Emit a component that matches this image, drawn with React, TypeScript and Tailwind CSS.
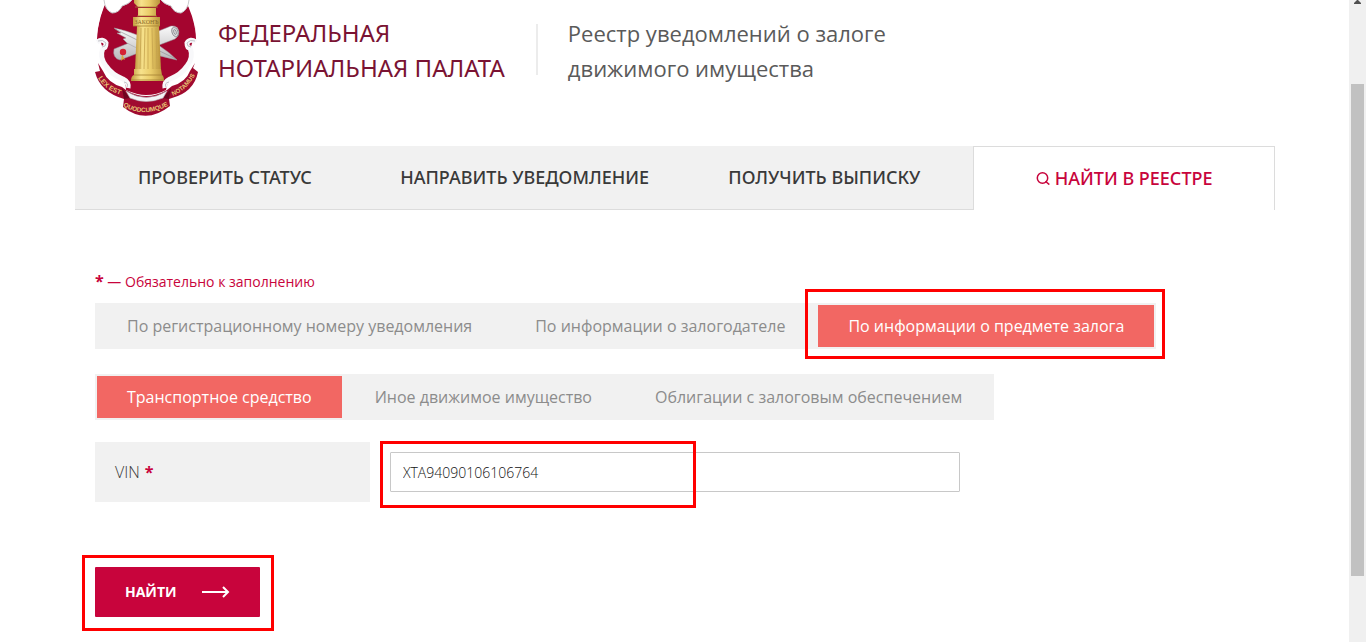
import { useState } from "react";

const mainTabs = ["Проверить статус", "Направить уведомление", "Получить выписку"];

function Emblem() {
  return (
    <svg viewBox="0 0 103 116" className="h-[116px] w-[103px] shrink-0" role="img" aria-label="Lex est quodcumque notamus">
      <defs>
        <linearGradient id="gold" x1="0" x2="1" y1="0" y2="0">
          <stop offset="0" stopColor="#c29b40" />
          <stop offset="0.3" stopColor="#f7e28c" />
          <stop offset="0.6" stopColor="#ebcd6a" />
          <stop offset="1" stopColor="#b8933c" />
        </linearGradient>
        <linearGradient id="paper" x1="0" x2="0" y1="0" y2="1">
          <stop offset="0" stopColor="#fafafa" />
          <stop offset="1" stopColor="#b9b9bb" />
        </linearGradient>
        <path id="mottoLeft" d="M3 78 Q10 91 32 97" />
        <path id="mottoMid" d="M28 106 Q51 120 80 102" />
        <path id="mottoRight" d="M78 96 Q94 89 102 71" />
      </defs>
      <path d="M5 0 H99 Q101 10 102 33 C103 45 96 46 97 57 C96 78 80 84 74 94 Q51 107 30 94 C24 84 8 78 7 57 C7 46 0 45 2 33 Q3 10 5 0Z" fill="#fff" />
      <path d="M12 0 Q3 15 2 39 Q8 42 7 50 C7 67 15 75 27 79 Q31 83 31 90 Q42 95 51 95 Q62 95 71 90 Q72 82 77 79 C89 74 96 64 97 51 Q95 42 101 39 Q101 15 90 0 L87 8 Q83 14 77 8 L72 0 H32 L25 9 Q20 14 16 8Z" fill="#a4052f" />
      <path d="M3 0 H12 Q5 14 2 34Z M100 0 H90 Q98 14 101 34Z" fill="#fff" />
      <path d="M9 0 Q10 10 17 13 Q24 13 27 6 Q34 4 37 0 M94 0 Q93 10 86 13 Q79 13 76 6 Q69 4 66 0" fill="#fff" stroke="#c9c9cc" strokeWidth="1" />
      <path d="M2 42 Q8 38 11 43 Q11 48 8 48 Q4 57 11 66 Q17 75 28 79 Q34 82 33 88 M101 42 Q95 38 92 43 Q92 48 95 48 Q99 57 92 66 Q86 75 75 79 Q69 82 70 88" fill="none" stroke="#f8f8fa" strokeWidth="5" />
      <path d="M3 41 Q8 39 11 43 Q11 47 7 47 M29 82 Q34 83 32 87 M100 41 Q95 39 92 43 Q92 47 96 47 M74 82 Q69 83 71 87" fill="none" stroke="#b4b4ba" strokeWidth="0.8" />
      <path d="M19 49 L76 26 Q83 25 84 32 Q84 36 80 39 L25 60 Q17 58 19 49Z" fill="url(#paper)" stroke="#8d8d92" strokeWidth="0.5" />
      <ellipse cx="80" cy="32" rx="3" ry="5" transform="rotate(-20 80 32)" fill="#d9d9db" stroke="#77777c" strokeWidth="0.7" />
      <ellipse cx="80" cy="32" rx="1.2" ry="2.5" transform="rotate(-20 80 32)" fill="none" stroke="#77777c" strokeWidth="0.6" />
      <path d="M19 28 Q30 30 45 36 Q66 44 82 60 Q62 56 47 50 Q39 47 32 43 L28 39 L31 38 L22 33 L26 33Z" fill="url(#paper)" stroke="#98989c" strokeWidth="0.5" />
      <path d="M20 29 Q48 43 81 59" fill="none" stroke="#8b8b90" strokeWidth="0.6" />
      <path d="M27 54 L30 60 L28 59 L26 61Z" fill="#d9a93d" />
      <circle cx="28" cy="52" r="3.2" fill="#d42334" />
      <path d="M42 26 H64 L66 70 H40Z" fill="url(#gold)" />
      <path d="M46 28 L45 69 M50 28 L49 69 M53 28 V69 M57 28 L58 69 M61 28 L62 69" stroke="#c4a24c" strokeWidth="0.8" />
      <path d="M39 0 H65 V3 L61 7 H43 L39 3Z M43 8 H61 V16 H43Z M38 17 H65 V26 H38Z" fill="url(#gold)" />
      <path d="M40 7 H63 M42 16 H62 M38 26 H65" stroke="#a58033" strokeWidth="0.8" />
      <text x="51.5" y="24" textAnchor="middle" fontSize="6" fill="#8a6b2a" className="font-['Liberation_Serif',serif]">ЗАКОНЪ</text>
      <path d="M39 69 H66 L67 75 Q69 76 69 81 H36 Q36 76 39 75Z" fill="url(#gold)" />
      <path d="M39 75 H67 M36 80 H69" stroke="#a58033" strokeWidth="0.8" />
      <path d="M3 63 L8 71 Q13 83 27 87 L31 90 Q51 102 72 90 L77 86 Q91 82 95 71 L100 63 L98 68 L103 72 Q99 92 77 98 L74 99 L75 106 Q51 125 28 107 L29 99 Q5 92 0 72 L5 71Z" fill="#a00b30" />
      <path d="M27 88 L35 98 L29 99 M76 88 L68 98 L74 99" fill="#6f0420" />
      <path d="M31 91 Q51 104 72 91 L68 98 Q51 105 35 98Z" fill="#f4f4f6" stroke="#b5b5ba" strokeWidth="0.6" />
      <g fontWeight="700" fill="#e8c675" className="font-['Liberation_Sans',sans-serif]">
        <text fontSize="6.8"><textPath href="#mottoLeft">LEX EST</textPath></text>
        <text fontSize="6.4"><textPath href="#mottoMid">QUODCUMQUE</textPath></text>
        <text fontSize="6.2"><textPath href="#mottoRight">NOTAMUS</textPath></text>
      </g>
    </svg>
  );
}

function Segments({ items, active, children }: { items: string[]; active: number; children?: React.ReactNode }) {
  return (
    <div className="flex w-fit gap-[3px] bg-[#f1f1f1] p-[2px]">
      {items.map((item, i) => (
        <div key={item} className="relative">
          <button
            type="button"
            aria-pressed={i === active}
            className={
              i === active
                ? "h-[42px] bg-[#f26763] px-[30px] text-base whitespace-nowrap text-white"
                : "h-[42px] px-[30px] text-base whitespace-nowrap text-[#8c8c8c]"
            }
          >
            {item}
          </button>
          {i === active && children}
        </div>
      ))}
    </div>
  );
}

export default function App() {
  const [vin, setVin] = useState("XTA94090106106764");

  return (
    <div className="flex min-h-screen bg-white font-['Noto_Sans','Open_Sans',sans-serif] text-[#393939]">
      <main className="min-w-0 flex-1 pr-[74px] pl-[75px]">
        <header className="flex h-[146px] items-start pl-5">
          <Emblem />
          <a href="#" className="mt-[15px] ml-5 text-2xl leading-[35px] whitespace-nowrap text-[#7a1333] uppercase">
            Федеральная
            <br />
            нотариальная палата
          </a>
          <div className="mt-6 ml-[31px] h-[51px] w-[2px] bg-[#ececec]" />
          <h1 className="mt-4 ml-[30px] font-['Open_Sans','Noto_Sans',sans-serif] text-[22px] leading-[35px] whitespace-nowrap text-[#5a5a5a]">
            Реестр уведомлений о залоге
            <br />
            движимого имущества
          </h1>
        </header>

        <nav className="flex h-16">
          {mainTabs.map((tab) => (
            <a
              key={tab}
              href="#"
              className="flex flex-1 items-center justify-center border-b border-[#dcdcdc] bg-[#f1f1f1] pb-[2px] text-lg font-medium whitespace-nowrap uppercase"
            >
              {tab}
            </a>
          ))}
          <a
            href="#"
            aria-current="page"
            className="-ml-px flex flex-1 items-center justify-center gap-[5px] border border-b-0 border-[#dcdcdc] bg-white pb-[2px] text-lg font-medium whitespace-nowrap text-[#c8043c] uppercase"
          >
            <svg viewBox="0 0 14 14" className="h-[14px] w-[14px]" fill="none" stroke="currentColor" strokeWidth="1.5" aria-hidden="true">
              <circle cx="6.5" cy="7" r="5.2" />
              <path d="M9.5 10.3 L13.3 13.6" />
            </svg>
            Найти в реестре
          </a>
        </nav>

        <form className="px-5 pt-[59px] font-['Open_Sans','Noto_Sans',sans-serif]" onSubmit={(e) => e.preventDefault()}>
          <p className="mb-[9px] text-sm leading-6 text-[#c8043c]">
            <span className="text-base leading-6 font-bold">*</span> — Обязательно к заполнению
          </p>

          <Segments
            items={["По регистрационному номеру уведомления", "По информации о залогодателе", "По информации о предмете залога"]}
            active={2}
          >
            <span className="pointer-events-none absolute -top-4 -right-[11px] -bottom-3 -left-[13px] border-3 border-[#ff0000]" />
          </Segments>

          <div className="mt-[25px]">
            <Segments items={["Транспортное средство", "Иное движимое имущество", "Облигации с залоговым обеспечением"]} active={0} />
          </div>

          <div className="mt-[22px] flex items-center gap-5">
            <label htmlFor="vin" className="flex h-[60px] w-[275px] items-center gap-[5px] bg-[#f1f1f1] px-5 text-base font-light">
              VIN <span className="font-bold text-[#c8043c]">*</span>
            </label>
            <div className="relative w-full max-w-[570px]">
              <input
                id="vin"
                value={vin}
                onChange={(e) => setVin(e.target.value)}
                className="block h-10 w-full rounded-[1px] border border-[#c8c8c8] px-3 text-sm font-light text-[#111] outline-none"
              />
              <span className="pointer-events-none absolute -top-[11px] -left-[10px] h-[67px] w-[316px] border-3 border-[#ff0000]" />
            </div>
          </div>

          <div className="relative mt-[65px] w-fit">
            <button type="submit" className="flex h-[50px] items-center gap-[25px] rounded-[1px] bg-[#c8043c] px-[30px] text-sm font-bold text-white uppercase">
              Найти
              <svg viewBox="0 0 28 12" className="h-3 w-7" fill="none" stroke="currentColor" strokeWidth="2" aria-hidden="true">
                <path d="M0 6 H26 M21 1 L26 6 L21 11" />
              </svg>
            </button>
            <span className="pointer-events-none absolute -top-3 -right-[14px] -bottom-[14px] -left-[13px] border-3 border-[#ff0000]" />
          </div>
        </form>
      </main>

      <aside className="flex w-[17px] shrink-0 flex-col items-center bg-[#f0f0f0]" aria-hidden="true">
        <svg viewBox="0 0 7 4" className="h-1 w-[7px]" fill="#505050">
          <path d="M3 0 H4 L7 3 V4 H0 V3Z" />
        </svg>
        <div className="mt-20 h-[492px] w-[13px] bg-[#c1c1c1]" />
      </aside>
    </div>
  );
}
